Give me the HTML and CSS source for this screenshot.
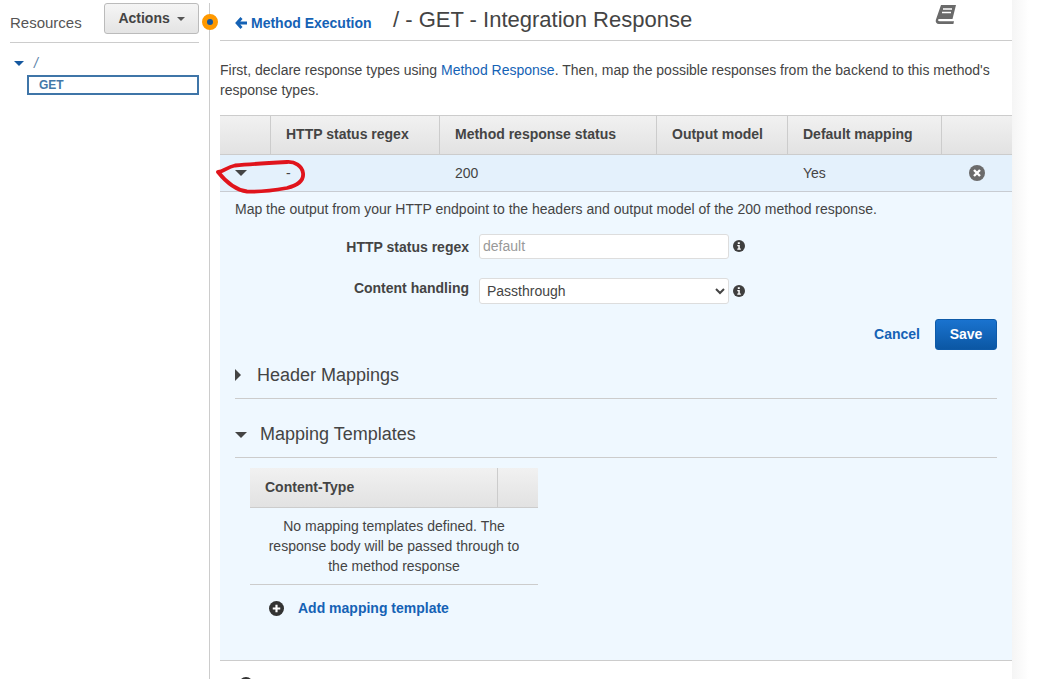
FILE: index.html
```html
<!DOCTYPE html>
<html lang="en">
<head>
  <meta charset="UTF-8">
  <title>Integration Response</title>
  <link rel="stylesheet" href="styles.css">
</head>
<body>
  <div class="page">
    <aside class="sidebar">
      <div class="sidebar-head">
        <span class="sidebar-title">Resources</span>
        <button class="actions-btn">Actions <span class="caret"></span></button>
      </div>
      <div class="tree">
        <div class="tree-root"><span class="tree-arrow"></span><span class="tree-slash">/</span></div>
        <div class="tree-method">GET</div>
      </div>
      <span class="resize-dot"></span>
    </aside>

    <main class="content">
      <div class="title-bar">
        <a class="back-link" href="#">
          <svg class="back-icon" viewBox="0 0 12 12"><path d="M6.500 1 2 6l4.500 5M2.500 6H12" fill="none" stroke="#1562b5" stroke-width="2.800"/></svg>
          Method Execution
        </a>
        <h1>/ - GET - Integration Response</h1>
        <svg class="book-icon" viewBox="0 0 21 19"><path d="M6 0h15l-3.500 14H4.500c-1.300 0-1.800.8-1.500 1.300s1 .9 1.800.9H19l-.6 2.800H4C1.500 19 .3 17 .8 15z" fill="#6a6a6a"/><path d="M8 4h9M7 7.500h9" stroke="#fff" stroke-width="1.300"/></svg>
      </div>

      <p class="intro">First, declare response types using <a href="#">Method Response</a>. Then, map the possible responses from the backend to this method's response types.</p>

      <div class="grid-row grid-head">
        <div></div>
        <div>HTTP status regex</div>
        <div>Method response status</div>
        <div>Output model</div>
        <div>Default mapping</div>
        <div></div>
      </div>
      <div class="grid-row grid-body">
        <div class="toggle-cell"><span class="arrow-down dark"></span></div>
        <div>-</div>
        <div>200</div>
        <div></div>
        <div>Yes</div>
        <div class="remove-cell">
          <svg class="round-icon" viewBox="0 0 16 16"><circle cx="8" cy="8" r="8" fill="#6b6b6b"/><path d="M5 5l6 6M11 5l-6 6" stroke="#fff" stroke-width="2.400"/></svg>
        </div>
      </div>

      <section class="detail">
        <p class="detail-note">Map the output from your HTTP endpoint to the headers and output model of the 200 method response.</p>

        <div class="form-row row-regex">
          <label>HTTP status regex</label>
          <input class="field" type="text" placeholder="default">
          <svg class="info-icon" viewBox="0 0 12 12"><circle cx="6" cy="6" r="6" fill="#3f3f3f"/><path d="M4.800 2.200h2v1.700h-2zM4.300 5h2.500v3.600h1v1.200H4.300V8.600h1V6.200h-1z" fill="#fff"/></svg>
        </div>
        <div class="form-row row-handling">
          <label>Content handling</label>
          <select class="field select"><option>Passthrough</option></select>
          <svg class="info-icon" viewBox="0 0 12 12"><circle cx="6" cy="6" r="6" fill="#3f3f3f"/><path d="M4.800 2.200h2v1.700h-2zM4.300 5h2.500v3.600h1v1.200H4.300V8.600h1V6.200h-1z" fill="#fff"/></svg>
        </div>

        <div class="form-actions">
          <a class="cancel" href="#">Cancel</a>
          <button class="save-btn">Save</button>
        </div>

        <div class="section-head head-closed">
          <span class="arrow-right"></span>
          <h2>Header Mappings</h2>
        </div>
        <div class="section-head head-open">
          <span class="arrow-down dark big"></span>
          <h2>Mapping Templates</h2>
        </div>

        <div class="templates">
          <div class="templates-head">
            <div>Content-Type</div>
            <div></div>
          </div>
          <p class="templates-empty">No mapping templates defined. The response body will be passed through to the method response</p>
          <a class="add-template" href="#">
            <svg class="round-icon" viewBox="0 0 14 14"><circle cx="7" cy="7" r="7" fill="#333"/><path d="M7 3.500v7M3.500 7h7" stroke="#fff" stroke-width="2"/></svg>
            Add mapping template
          </a>
        </div>
      </section>
      <div class="clipped-row"><span class="clipped-icon"></span></div>
    </main>
    <div class="edge"></div>
  </div>

  <!-- red pen scribble on top of the screenshot -->
  <svg class="scribble" viewBox="0 0 100 40" width="100" height="40">
    <path d="M3 14C8 14 12 9 20 7.500 36 6 54 5 72 4 80 3.500 87 8 88 15 89 22 84 27 72 30 58 32.500 42 34 32 33.500 20 32 11 24 3 14" fill="none" stroke="#e0141c" stroke-width="3.800" stroke-linecap="round" stroke-linejoin="round"/>
  </svg>
</body>
</html>
```
FILE: styles.css
```css
html, body { margin: 0; height: 679px; overflow: hidden; background: #fff; }
body { font-family: "Liberation Sans", Arial, sans-serif; font-size: 14px; color: #444; position: relative; }
a { color: #1562b5; text-decoration: none; }
p { margin: 0; }

.page { display: flex; height: 679px; }

/* left column */
.sidebar { width: 189px; flex: none; padding: 0 10px; margin-top: 3px; border-right: 1px solid #ccc; position: relative; }
.sidebar-head { display: flex; justify-content: space-between; align-items: flex-start; height: 39px; border-bottom: 1px solid #ccc; }
.sidebar-title { font-size: 15px; margin-top: 11px; color: #555; }
.actions-btn { width: 95px; height: 31px; font: bold 14px "Liberation Sans", Arial, sans-serif; color: #444; background: linear-gradient(#f5f5f5, #e4e4e4); border: 1px solid #bbb; border-radius: 3px; padding: 0 0 2px; }
.caret { display: inline-block; margin-left: 3px; vertical-align: middle; border-left: 4px solid transparent; border-right: 4px solid transparent; border-top: 4px solid #555; }
.tree { padding-top: 13px; }
.tree-root { display: flex; align-items: center; height: 14px; }
.tree-arrow { width: 0; height: 0; margin: 0 0 0 4px; border-left: 5px solid transparent; border-right: 5px solid transparent; border-top: 5px solid #15589f; }
.tree-slash { margin-left: 10px; color: #5a7fa8; font-style: italic; font-size: 14px; }
.tree-method { margin: 5px 0 0 17px; height: 16px; line-height: 16px; border: 2px solid #3f75a8; padding-left: 10px; font-weight: bold; font-size: 12px; color: #4478a8; }
.resize-dot { position: absolute; right: -9px; top: 11px; width: 6px; height: 6px; background: #15589f; border: 5.500px solid #ff9900; border-radius: 50%; }

/* main column */
.content { width: 792px; flex: none; margin-left: 10px; }
.title-bar { display: flex; align-items: center; height: 40px; border-bottom: 1px solid #ccc; position: relative; }
.back-link { display: flex; align-items: center; margin-left: 15px; width: 158px; font-weight: bold; font-size: 14px; padding-top: 6px; }
.back-icon { width: 12px; height: 12px; margin-right: 4px; }
.title-bar h1 { margin: 0; font-size: 22px; font-weight: normal; color: #444; }
.book-icon { position: absolute; left: 715px; top: 5px; width: 21px; height: 19px; }
.intro { margin-top: 19px; line-height: 20px; color: #444; }

.grid-row { display: grid; grid-template-columns: 50px 169px 217px 131px 154px 71px; }
.grid-head { margin-top: 15px; height: 38px; background: linear-gradient(#f1f1f1, #e2e2e2); border-top: 1px solid #ccc; border-bottom: 1px solid #ccc; font-weight: bold; }
.grid-head > div { padding-left: 15px; line-height: 37px; border-left: 1px solid #ccc; }
.grid-head > div:first-child { border-left: 0; }
.grid-body { height: 36px; background: #e4f1fc; border-bottom: 1px solid #c8ccd2; line-height: 36px; }
.grid-body > div { padding-left: 16px; }
.grid-body > .toggle-cell { padding-left: 15px; }
.grid-body > .remove-cell { display: flex; align-items: center; padding-left: 28px; }
.round-icon { width: 16px; height: 16px; }

.arrow-down { display: inline-block; width: 0; height: 0; vertical-align: 2px; border-left: 6px solid transparent; border-right: 6px solid transparent; border-top: 6px solid #444; }
.arrow-right { width: 0; height: 0; border-top: 6px solid transparent; border-bottom: 6px solid transparent; border-left: 6px solid #444; }

.detail { height: 468px; background: #eff8ff; border-bottom: 1px solid #ccc; padding: 0 15px; position: relative; }
.detail-note { padding-top: 8px; line-height: 18px; }
.form-row { display: flex; align-items: center; }
.form-row label { width: 234px; text-align: right; font-weight: bold; margin-right: 10px; }
.row-regex { margin-top: 16px; }
.row-regex .field { padding-bottom: 2px; }
.row-regex .info-icon { margin-bottom: 2px; }
.row-handling { margin-top: 19px; }
.row-handling label { padding-bottom: 6px; }
.field { box-sizing: border-box; width: 250px; height: 25px; border: 1px solid #ddd; border-radius: 3px; background: #fff; font: 14px "Liberation Sans", Arial, sans-serif; color: #444; padding: 0 3px; }
.field::placeholder { color: #999; }
.select { height: 26px; }
.info-icon { width: 12px; height: 12px; margin-left: 4px; }
.form-actions { display: flex; justify-content: flex-end; align-items: center; margin-top: 15px; }
.cancel { font-weight: bold; margin-right: 15px; padding-bottom: 2px; }
.save-btn { width: 62px; height: 31px; font: bold 14px "Liberation Sans", Arial, sans-serif; color: #fff; background: linear-gradient(#1a73cf, #0b57a4); border: 1px solid #0e5aa8; border-radius: 3px; padding: 0 0 1px; }

.section-head { display: flex; align-items: flex-start; border-bottom: 1px solid #ccc; box-sizing: border-box; }
.section-head h2 { margin: 0; font-size: 18px; font-weight: normal; line-height: 22px; color: #444; }
.head-closed { margin-top: 13px; height: 36px; }
.head-closed .arrow-right { margin-top: 6px; margin-right: 16px; }
.head-closed h2 { margin-top: 1px; }
.head-open { height: 59px; }
.head-open h2 { margin-top: 24px; }
.big { margin-top: 33px; margin-right: 13px; }

.templates { width: 288px; margin-left: 15px; margin-top: 10px; }
.templates-head { display: grid; grid-template-columns: 247px 41px; height: 39px; background: linear-gradient(#f1f1f1, #e2e2e2); border-bottom: 1px solid #ccc; font-weight: bold; line-height: 39px; }
.templates-head > div:first-child { padding-left: 15px; }
.templates-head > div:last-child { border-left: 1px solid #ccc; }
.templates-empty { padding: 8px 15px; height: 60px; line-height: 20px; text-align: center; border-bottom: 1px solid #ccc; }
.add-template { display: flex; align-items: center; padding: 15px 0 0 19px; font-weight: bold; }
.add-template .round-icon { width: 15px; height: 15px; margin-right: 14px; }

.clipped-row { height: 20px; position: relative; }
.clipped-icon { position: absolute; left: 19px; top: 16px; width: 14px; height: 14px; border-radius: 50%; background: #333; }

.edge { flex: 1; background: linear-gradient(90deg, #f5f5f5, #fff 60%); }

.scribble { position: absolute; left: 215px; top: 158px; }
```
